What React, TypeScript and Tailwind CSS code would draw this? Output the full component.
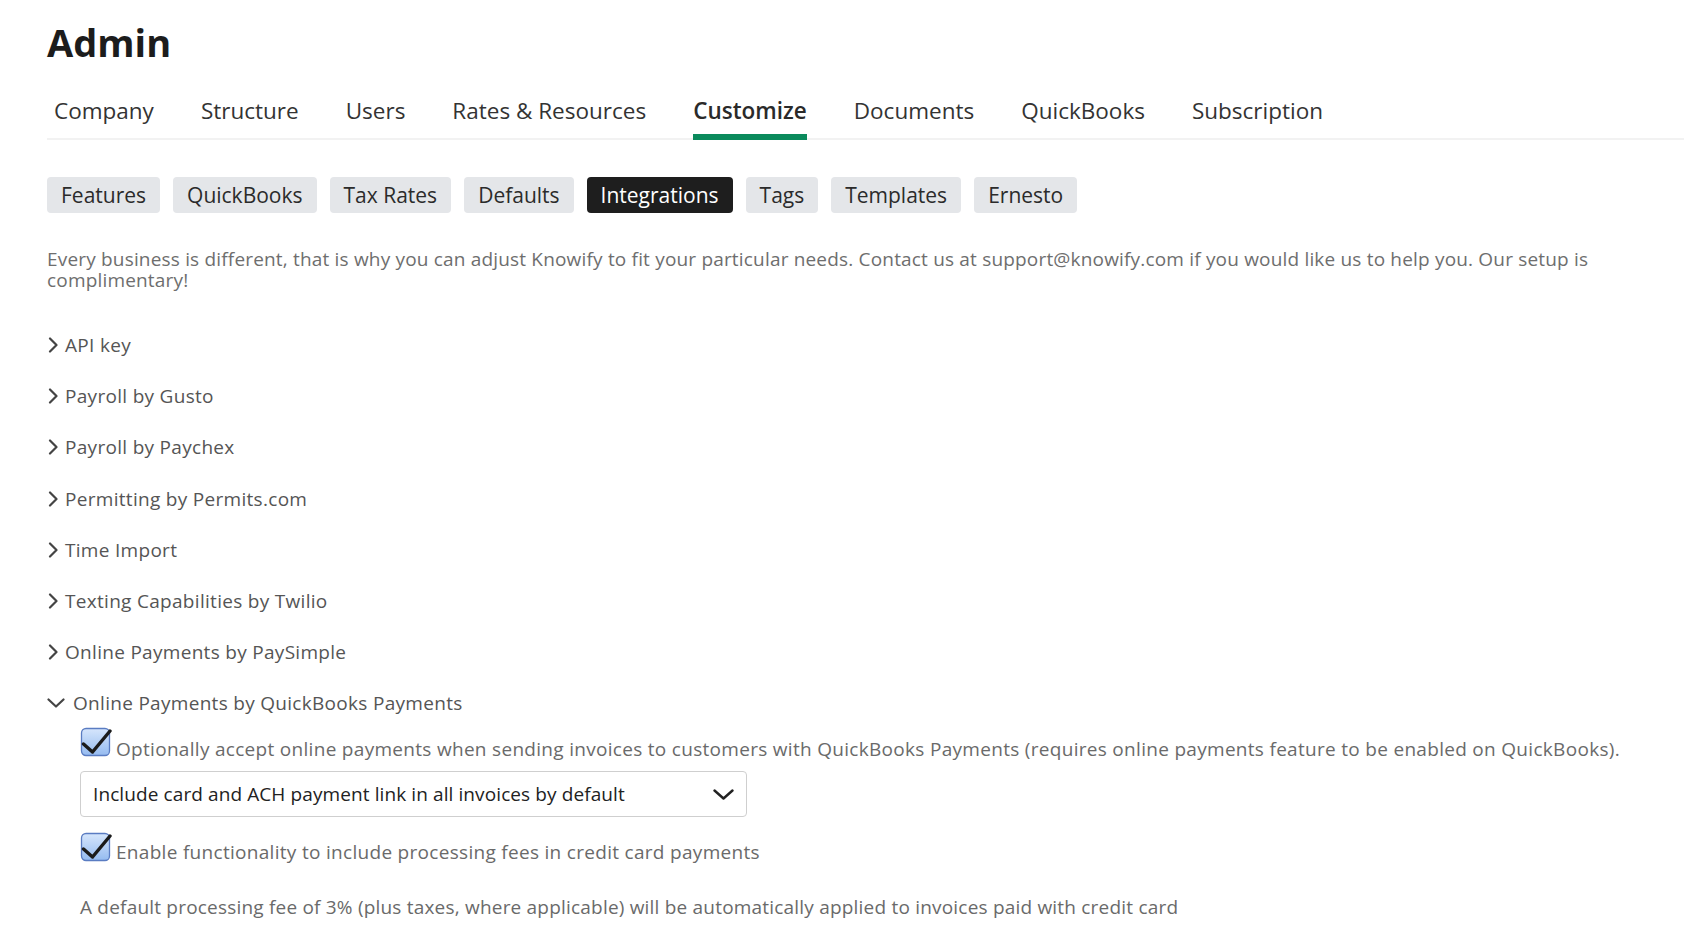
import React, { useState } from "react";

const mainTabs = [
  "Company",
  "Structure",
  "Users",
  "Rates & Resources",
  "Customize",
  "Documents",
  "QuickBooks",
  "Subscription",
];

const subTabs = [
  "Features",
  "QuickBooks",
  "Tax Rates",
  "Defaults",
  "Integrations",
  "Tags",
  "Templates",
  "Ernesto",
];

const integrations = [
  "API key",
  "Payroll by Gusto",
  "Payroll by Paychex",
  "Permitting by Permits.com",
  "Time Import",
  "Texting Capabilities by Twilio",
  "Online Payments by PaySimple",
];

function ChevronRight() {
  return (
    <svg width="12" height="16" viewBox="0 0 12 16" className="shrink-0">
      <path d="M3 1.5 L9.5 8 L3 14.5" fill="none" stroke="#444" strokeWidth="2.2" strokeLinecap="round" strokeLinejoin="round" />
    </svg>
  );
}

function ChevronDown({ w = 18, h = 10, color = "#444", sw = 2.2 }: { w?: number; h?: number; color?: string; sw?: number }) {
  return (
    <svg width={w} height={h} viewBox={`0 0 ${w} ${h}`} className="shrink-0">
      <path d={`M1.5 1.5 L${w / 2} ${h - 1.5} L${w - 1.5} 1.5`} fill="none" stroke={color} strokeWidth={sw} strokeLinecap="round" strokeLinejoin="round" />
    </svg>
  );
}

// glossy mac-style checkbox
function CheckBox({ id }: { id: string }) {
  return (
    <svg width="32" height="32" viewBox="0 0 32 32" className="shrink-0">
      <defs>
        <linearGradient id={id} x1="0" y1="0" x2="0" y2="1">
          <stop offset="0" stopColor="#d6e6fc" />
          <stop offset="1" stopColor="#95bbf0" />
        </linearGradient>
      </defs>
      <rect x="1.5" y="3.5" width="28" height="27" rx="4.5" fill={`url(#${id})`} stroke="#5a7cc2" strokeWidth="1.3" />
      <path d="M3.5 19 L12.5 27 L30 6" fill="none" stroke="#1b1b1b" strokeWidth="3.4" strokeLinecap="round" strokeLinejoin="round" />
    </svg>
  );
}

export default function App() {
  const [active, setActive] = useState("Customize");
  const [sub, setSub] = useState("Integrations");
  const [acceptOnline, setAcceptOnline] = useState(true);
  const [fees, setFees] = useState(true);

  return (
    <div className="min-h-screen bg-white pl-[47px] font-['Open_Sans',sans-serif]">
      <h1 className="pt-[19px] text-[38px] font-bold leading-[46px] text-[#1c1c1c]">Admin</h1>

      {/* Main tabs */}
      <div className="mt-[31px] flex gap-[47px] border-b-2 border-[#f2f2f2] pl-[7px]">
        {mainTabs.map((t) => (
          <button
            key={t}
            onClick={() => setActive(t)}
            className={`-mb-[2px] rounded-t-[3px] border-b-[6px] pb-[8px] text-[22.5px] leading-[30px] ${
              active === t ? "border-[#0b8a5c] font-semibold text-[#2a2a2a]" : "border-transparent text-[#333]"
            }`}
          >
            {t}
          </button>
        ))}
      </div>

      {/* Sub tabs */}
      <div className="mt-[37px] flex gap-[13px]">
        {subTabs.map((t) => (
          <button
            key={t}
            onClick={() => setSub(t)}
            className={`h-[36px] rounded-[4px] px-[14px] text-[21px] leading-[36px] ${
              sub === t ? "bg-[#1e1e1e] text-white" : "bg-[#e4e6e9] text-[#2b2b2b]"
            }`}
          >
            {t}
          </button>
        ))}
      </div>

      <p className="mt-[36px] pr-[60px] text-[19px] leading-[20.5px] tracking-[0.18px] text-[#6e6e6e]">
        Every business is different, that is why you can adjust Knowify to fit your particular needs. Contact us at support@knowify.com if you would like us to help you. Our setup is complimentary!
      </p>

      {/* Integrations list */}
      <div className="mt-[43px] flex flex-col gap-[27.2px] text-[19px] leading-[24px] tracking-[0.3px] text-[#555]">
        {integrations.map((name) => (
          <div key={name} className="flex h-[24px] items-center gap-[6px]">
            <ChevronRight />
            <span>{name}</span>
          </div>
        ))}

        <div>
          <div className="flex h-[24px] items-center gap-[8px]">
            <ChevronDown w={18} h={10} />
            <span>Online Payments by QuickBooks Payments</span>
          </div>

          <div className="pl-[33px]">
            <label className="mt-[10px] flex cursor-pointer items-start gap-[4px]" onClick={() => setAcceptOnline(!acceptOnline)}>
              {acceptOnline ? <CheckBox id="cb1" /> : <span className="h-[32px] w-[32px]" />}
              <span className="mt-[12px] text-[#6a6a6a]">
                Optionally accept online payments when sending invoices to customers with QuickBooks Payments (requires online payments feature to be enabled on QuickBooks).
              </span>
            </label>

            <div className="mt-[10px] flex h-[46px] w-[667px] items-center justify-between rounded-[4px] border border-[#cfcfcf] pl-[12px] pr-[12px] tracking-[0.1px] text-[#222]">
              <span>Include card and ACH payment link in all invoices by default</span>
              <ChevronDown w={21} h={11} color="#222" sw={2.4} />
            </div>

            <label className="mt-[13px] flex cursor-pointer items-start gap-[4px]" onClick={() => setFees(!fees)}>
              {fees ? <CheckBox id="cb2" /> : <span className="h-[32px] w-[32px]" />}
              <span className="mt-[10px] text-[#6a6a6a]">Enable functionality to include processing fees in credit card payments</span>
            </label>

            <p className="mt-[31px] tracking-[0.2px] text-[#6a6a6a]">
              A default processing fee of 3% (plus taxes, where applicable) will be automatically applied to invoices paid with credit card
            </p>
          </div>
        </div>
      </div>
    </div>
  );
}
